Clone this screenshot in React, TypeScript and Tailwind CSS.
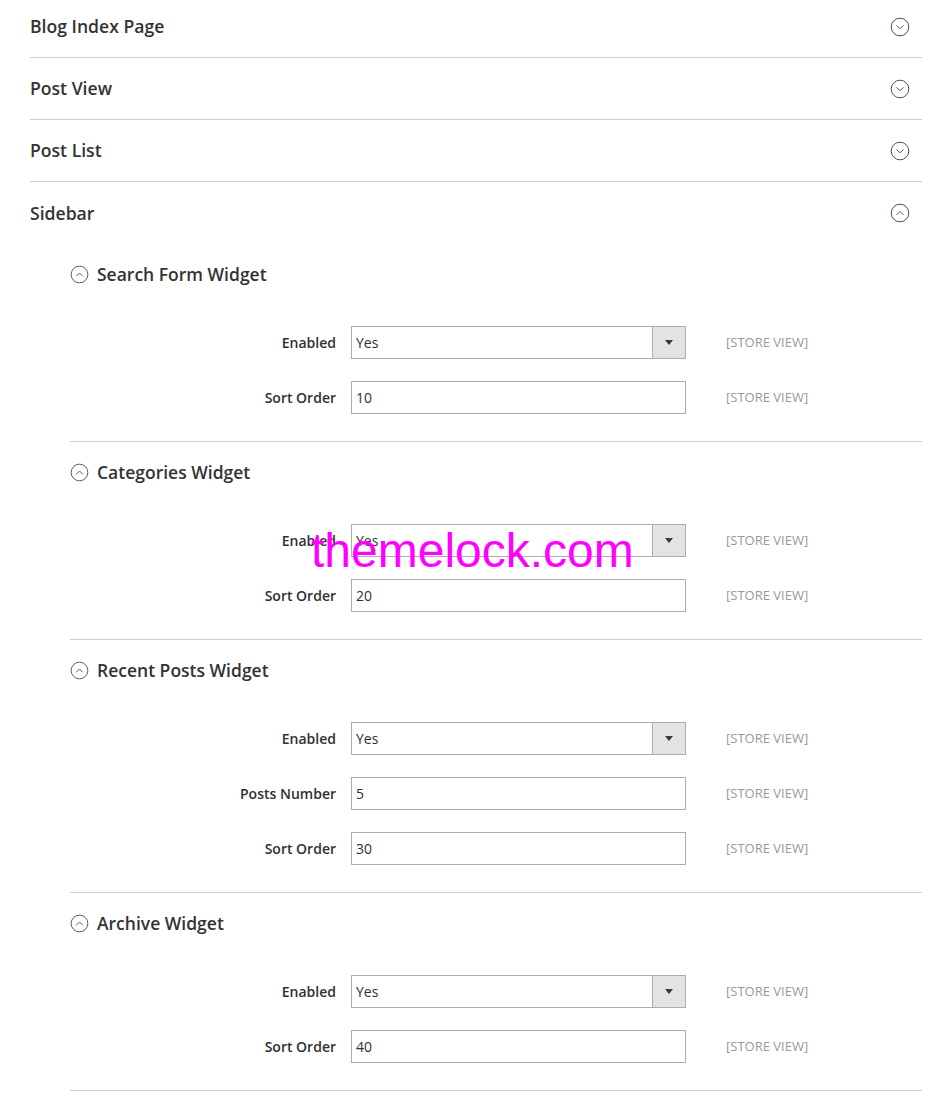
import React from 'react';

type Field = {
  label: string;
  value: string;
  select?: boolean;
};

type Widget = {
  title: string;
  fields: Field[];
};

const widgets: Widget[] = [
  {
    title: 'Search Form Widget',
    fields: [
      { label: 'Enabled', value: 'Yes', select: true },
      { label: 'Sort Order', value: '10' },
    ],
  },
  {
    title: 'Categories Widget',
    fields: [
      { label: 'Enabled', value: 'Yes', select: true },
      { label: 'Sort Order', value: '20' },
    ],
  },
  {
    title: 'Recent Posts Widget',
    fields: [
      { label: 'Enabled', value: 'Yes', select: true },
      { label: 'Posts Number', value: '5' },
      { label: 'Sort Order', value: '30' },
    ],
  },
  {
    title: 'Archive Widget',
    fields: [
      { label: 'Enabled', value: 'Yes', select: true },
      { label: 'Sort Order', value: '40' },
    ],
  },
];

// Circle with a chevron, used for collapsible titles
const CircleChevron: React.FC<{ open?: boolean; className?: string }> = ({ open, className }) => (
  <svg viewBox="0 0 20 20" className={className} fill="none" stroke="#5a514b" strokeWidth="1">
    <circle cx="10" cy="10" r="8.8" />
    {open ? (
      <path d="M6.8 11.6 L10 8.4 L13.2 11.6" strokeLinecap="round" strokeLinejoin="round" />
    ) : (
      <path d="M6.8 8.6 L10 11.8 L13.2 8.6" strokeLinecap="round" strokeLinejoin="round" />
    )}
  </svg>
);

const SectionHeader: React.FC<{ title: string; open?: boolean; divider?: boolean }> = ({ title, open, divider = true }) => (
  <div className={`flex h-[62px] items-center justify-between pr-[12px] ${divider ? 'border-b border-[#cccccc]' : ''}`}>
    <span className="text-[17.6px] font-semibold text-[#333333]">{title}</span>
    <CircleChevron open={open} className="h-[20px] w-[20px]" />
  </div>
);

const FieldRow: React.FC<{ field: Field }> = ({ field }) => (
  <div className="flex h-[33px] items-center">
    <label className="w-[266px] text-right text-[14px] font-semibold text-[#303030]">{field.label}</label>
    {field.select ? (
      <div className="ml-[15px] flex h-[33px] w-[335px] border border-[#adadad] bg-white">
        <div className="flex flex-1 items-center pl-[4px] text-[14px] text-[#303030]">{field.value}</div>
        <div className="flex w-[33px] items-center justify-center border-l border-[#adadad] bg-[#e3e3e3]">
          <svg viewBox="0 0 8 5" className="h-[5px] w-[8px]" fill="#41362f">
            <path d="M0 0 H8 L4 5 Z" />
          </svg>
        </div>
      </div>
    ) : (
      <div className="ml-[15px] flex h-[33px] w-[335px] items-center border border-[#adadad] bg-white pl-[4px] text-[14px] text-[#303030]">
        {field.value}
      </div>
    )}
    <span className="ml-[40px] text-[13px] uppercase text-[#999999]">[Store View]</span>
  </div>
);

const WidgetGroup: React.FC<{ widget: Widget }> = ({ widget }) => (
  <div className="border-b border-[#cccccc] pb-[27px] pt-[10px]">
    <div className="flex h-[40px] items-center gap-[8px]">
      <CircleChevron open className="h-[19px] w-[19px]" />
      <span className="text-[17.5px] font-semibold text-[#333333]">{widget.title}</span>
    </div>
    <div className="mt-[32px] flex flex-col gap-[22px]">
      {widget.fields.map((f, i) => (
        <FieldRow key={i} field={f} />
      ))}
    </div>
  </div>
);

export default function App() {
  return (
    <div className="relative min-h-[1104px] bg-white" style={{ fontFamily: '"Open Sans", "Noto Sans", sans-serif' }}>
      <div className="ml-[30px] mr-[26px] -mt-[4px]">
        <SectionHeader title="Blog Index Page" />
        <SectionHeader title="Post View" />
        <SectionHeader title="Post List" />
        <SectionHeader title="Sidebar" open divider={false} />

        <div className="ml-[40px]">
          {widgets.map((w) => (
            <WidgetGroup key={w.title} widget={w} />
          ))}
        </div>
      </div>

      {/* watermark over the page */}
      <div
        className="pointer-events-none absolute left-[311px] top-[531px] text-[48px] leading-none text-[#ff00ff]"
        style={{ fontFamily: '"Liberation Sans", Arial, sans-serif' }}
      >
        themelock.com
      </div>
    </div>
  );
}
